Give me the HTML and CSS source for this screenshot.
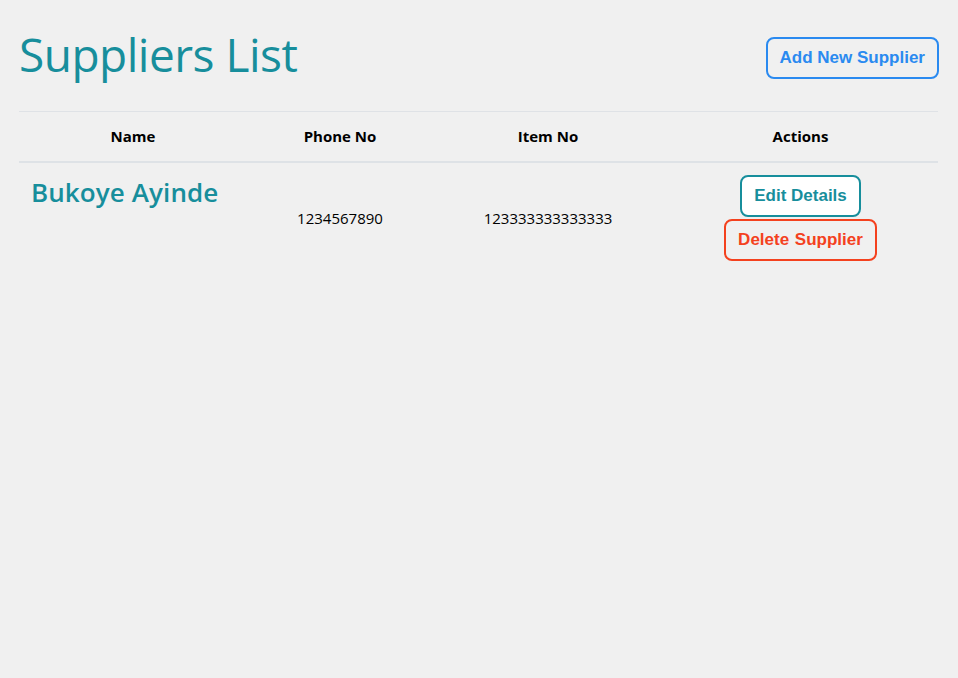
FILE: index.html
```html
<!DOCTYPE html>
<html>
<head>
<meta charset="utf-8">
<link rel="stylesheet" href="styles.css">
</head>
<body>
<div class="page">
  <div class="top">
    <h1 class="title">Suppliers List</h1>
    <button class="btn btn-add">Add New Supplier</button>
  </div>
  <table class="table">
    <thead>
      <tr>
        <th class="c1">Name</th>
        <th class="c2">Phone No</th>
        <th class="c3">Item No</th>
        <th class="c4">Actions</th>
      </tr>
    </thead>
    <tbody>
      <tr>
        <td class="name-cell"><span class="name">Bukoye Ayinde</span></td>
        <td class="val">1234567890</td>
        <td class="val">123333333333333</td>
        <td class="actions">
          <div class="stack">
            <button class="btn btn-edit">Edit Details</button>
            <button class="btn btn-del">Delete Supplier</button>
          </div>
        </td>
      </tr>
    </tbody>
  </table>
</div>
</body>
</html>
```
FILE: styles.css
```css
html, body {
  margin: 0;
  padding: 0;
  background: #f0f0f0;
}
body {
  font-family: "Open Sans", "Noto Sans", sans-serif;
  color: #000;
}
.page {
  padding: 0 20px 0 19px;
}
.top {
  display: flex;
  justify-content: space-between;
  align-items: flex-start;
  padding-top: 24px;
  height: 111px;
  box-sizing: border-box;
}
.title {
  margin: 0;
  font-weight: 400;
  font-size: 46px;
  line-height: 60px;
  color: #178e9c;
  letter-spacing: -0.5px;
}
.btn {
  font-family: "Liberation Sans", Arial, sans-serif;
  font-weight: 700;
  background: #f0f0f0;
  border: 2px solid;
  border-radius: 8px;
  cursor: pointer;
  font-size: 17px;
  height: 42px;
  padding: 0 12px;
}
.btn-add {
  margin-top: 13px;
  margin-right: -1px;
  color: #2a8af0;
  border-color: #2a8af0;
}
.table {
  width: 100%;
  border-collapse: collapse;
  table-layout: fixed;
}
.table th {
  border-top: 1px solid #dfe2e6;
  border-bottom: 2px solid #dee2e6;
  height: 50px;
  padding: 0 12px;
  font-size: 15px;
  font-weight: 700;
  text-align: center;
  vertical-align: middle;
  box-sizing: border-box;
}
.c1 { width: 228px; }
.c2 { width: 186px; }
.c3 { width: 230px; }
.table td {
  padding: 12px;
  vertical-align: middle;
  text-align: center;
  font-size: 15px;
}
.table td.name-cell {
  text-align: left;
  vertical-align: top;
  padding-top: 13px;
}
.name {
  font-size: 26px;
  font-weight: 600;
  color: #178e9c;
  line-height: 32px;
  letter-spacing: 0.1px;
}
.stack {
  display: flex;
  flex-direction: column;
  align-items: center;
  gap: 2px;
}
.btn-edit {
  background: #ffffff;
  color: #178e9c;
  border-color: #178e9c;
}
.btn-del {
  color: #f4411e;
  border-color: #f4411e;
  word-spacing: 1px;
}
```
